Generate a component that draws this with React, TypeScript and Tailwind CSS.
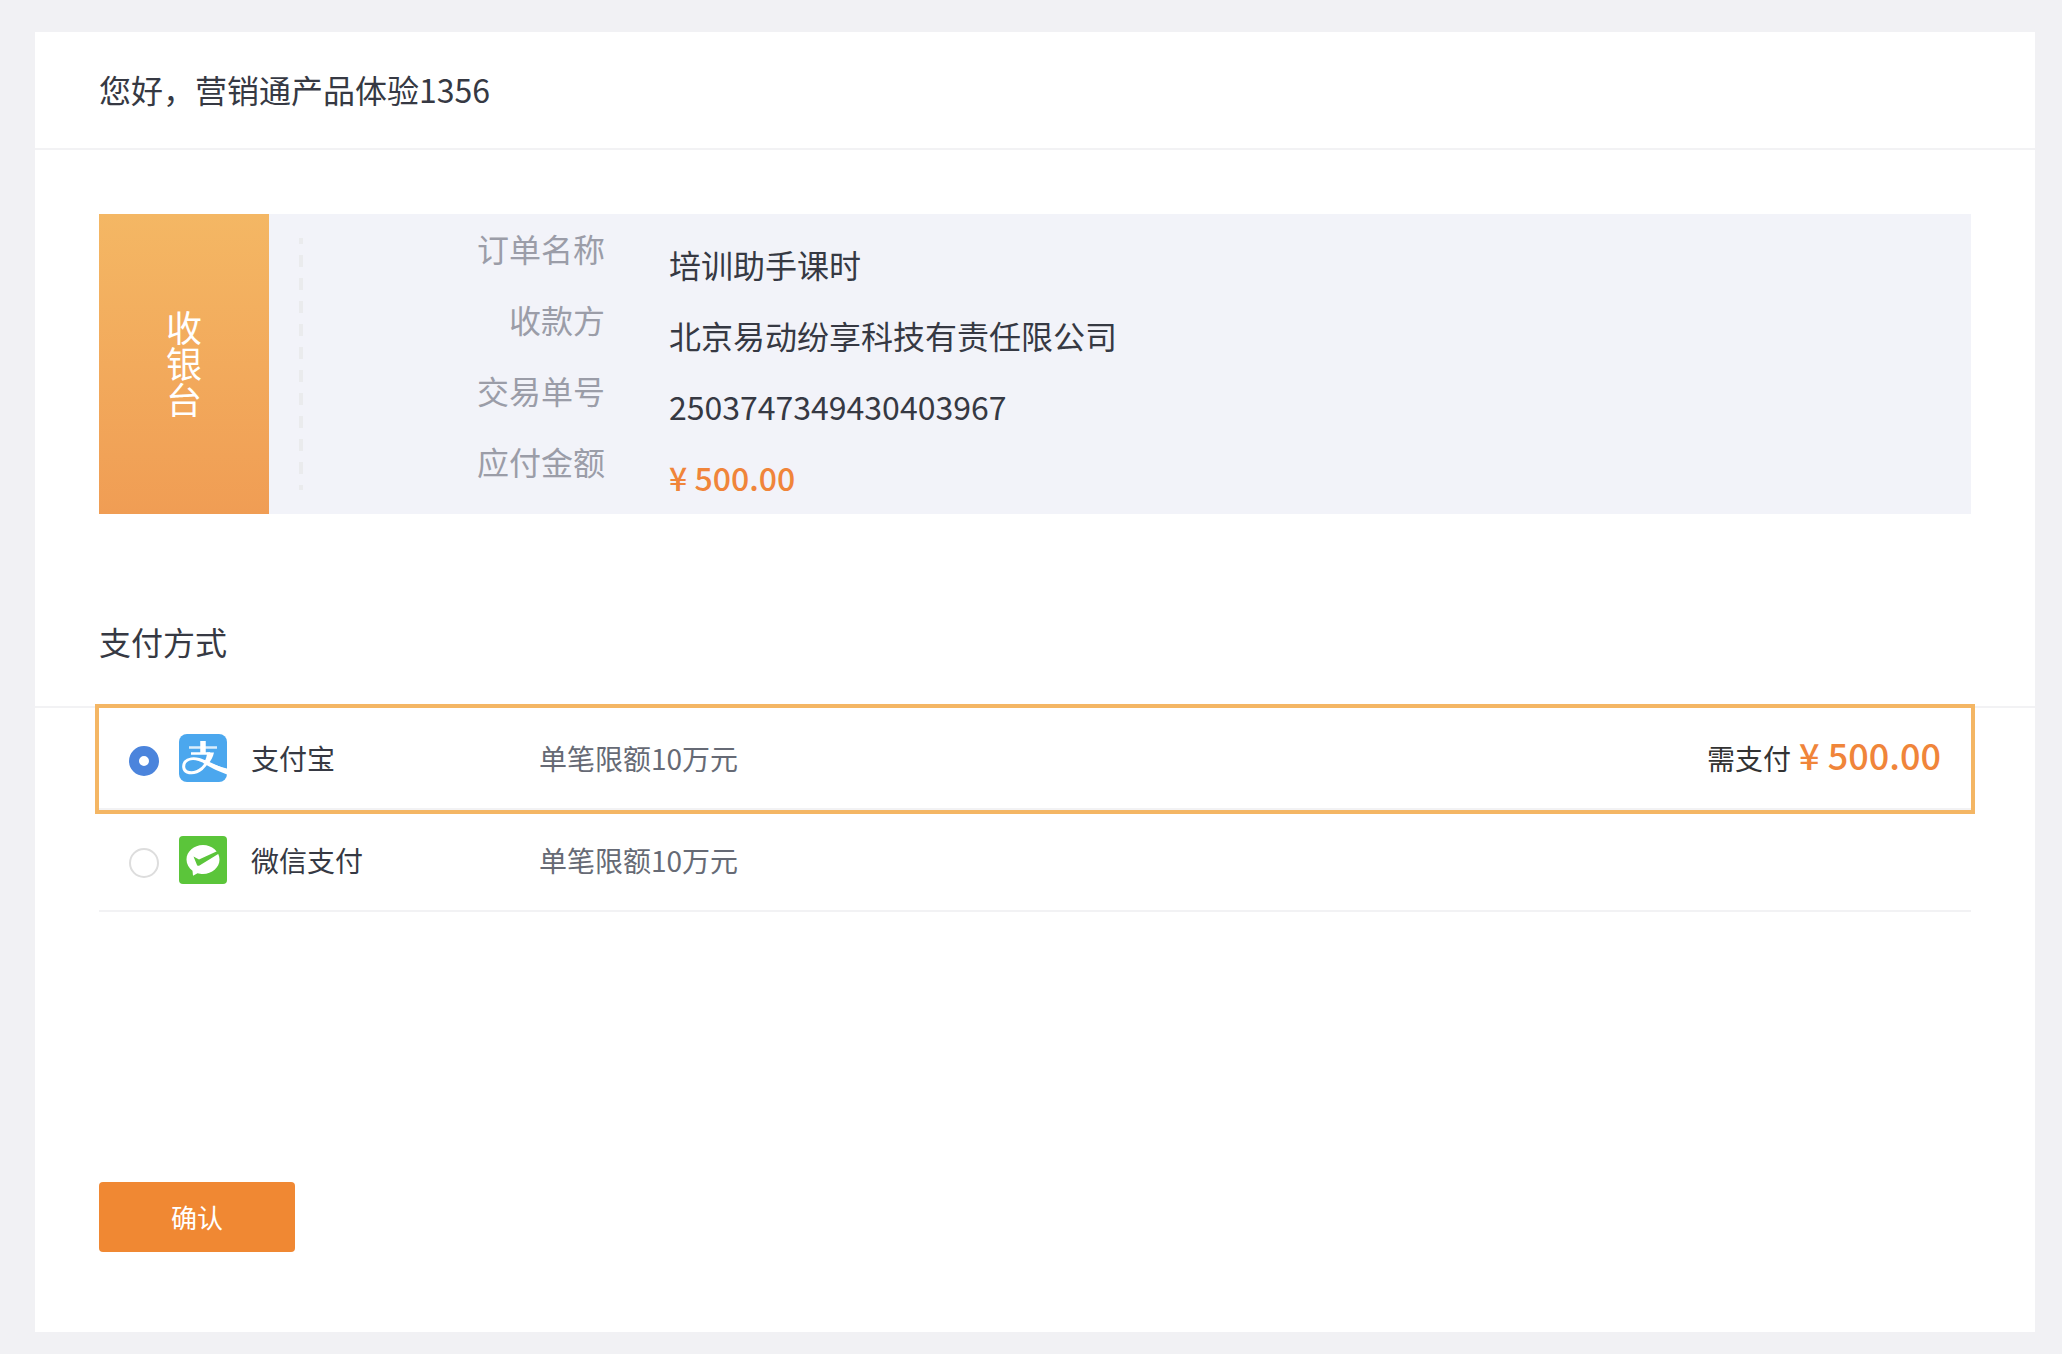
import React, { useState } from 'react';

const AlipayIcon: React.FC = () => (
  <svg viewBox="0 0 48 48" className="h-12 w-12 shrink-0" fill="none" aria-hidden="true">
    <rect width="48" height="48" rx="8" fill="#4ba7ee" />
    <path d="M24 7v13" stroke="#fff" strokeWidth="5.500" />
    <path d="M10 13.500h28" stroke="#fff" strokeWidth="2.500" opacity="0.8" />
    <path d="M12 19.500h19" stroke="#fff" strokeWidth="2.500" />
    <path
      d="M32 19C30 25 28 30 23 34.500C18 38.500 12 39.500 8 38C4 36.500 4 31 6 28C9 24.500 15 24 20 25.500C27 27.500 37 33 48 37"
      stroke="#fff"
      strokeWidth="3"
    />
    <path d="M28 18.500h7C34 23 32 27 29 30L25 28.500C27 25 28 22 28 18.500Z" fill="#fff" />
    <path d="M24 26.500C32 29.500 40 32.500 48 34.500V40.500C41 38 32 34 24 29Z" fill="#fff" />
  </svg>
);

const WechatPayIcon: React.FC = () => (
  <svg viewBox="0 0 48 48" className="h-12 w-12 shrink-0" fill="none" aria-hidden="true">
    <rect width="48" height="48" rx="4" fill="#5bc53a" />
    <path
      d="M24 9C33 9 40.500 15.500 40.500 23.500S33 38 24 38C22 38 20 37.700 18.500 37.200L14 39.800L13.500 34.800C9.800 32 7.500 28 7.500 23.500C7.500 15.500 15 9 24 9Z"
      fill="#fff"
    />
    <path d="M14.500 20.500L20 23.500L38.500 15L40 17.500L20.500 29.500C19.500 30 18.500 30 18 29Z" fill="#5bc53a" />
  </svg>
);

const orderInfo = [
  { label: '订单名称', value: '培训助手课时' },
  { label: '收款方', value: '北京易动纷享科技有责任限公司' },
  { label: '交易单号', value: '2503747349430403967' },
  { label: '应付金额', value: '¥ 500.00', highlight: true },
];

const methods = [
  { id: 'alipay', name: '支付宝', limit: '单笔限额10万元', icon: <AlipayIcon /> },
  { id: 'wechat', name: '微信支付', limit: '单笔限额10万元', icon: <WechatPayIcon /> },
];

const App: React.FC = () => {
  const [selected, setSelected] = useState('alipay');

  return (
    <div className="min-h-screen bg-[#f1f1f4] pt-8 pr-[27px] pb-[22px] pl-[35px] font-['Noto_Sans_CJK_SC',sans-serif] text-[#363943]">
      <main className="bg-white pb-20">
        <header className="flex h-[118px] items-center border-b-2 border-[#f2f2f4] px-16 pb-0.5">
          <h1 className="text-[32px]">您好，营销通产品体验1356</h1>
        </header>

        {/* Order summary */}
        <section className="mx-16 mt-16 flex bg-[#f2f3f9]">
          <div className="flex w-[170px] items-center justify-center bg-linear-to-b from-[#f4b764] to-[#f09d54] pb-1">
            <span className="w-9 text-center text-4xl leading-9 text-white">收银台</span>
          </div>
          <div className="my-6 ml-[30px] w-1 bg-[repeating-linear-gradient(to_bottom,#eaebed_0px,#eaebed_6px,transparent_6px,transparent_17px,#eaebed_17px,#eaebed_23px)]" />
          <dl className="flex-1 pb-4">
            {orderInfo.map((item) => (
              <div key={item.label} className="flex h-[71px] gap-16 text-[32px] leading-[68px]">
                <dt className="w-[302px] text-right text-[#9b9da8]">{item.label}</dt>
                <dd className={`pt-4 ${item.highlight ? 'font-medium text-[#f0853a]' : ''}`}>{item.value}</dd>
              </div>
            ))}
          </dl>
        </section>

        {/* Payment methods */}
        <h2 className="mt-16 flex h-[130px] items-center border-b-2 border-[#f2f2f4] px-16 pb-0.5 text-[32px]">支付方式</h2>
        <div className="mx-16">
          {methods.map((method) => (
            <label
              key={method.id}
              className={`flex h-[102px] cursor-pointer items-center border-b-2 border-[#f2f2f4] px-[30px] text-[28px] ${
                selected === method.id ? 'outline-4 outline-[#f4b664]' : ''
              }`}
            >
              <input
                type="radio"
                name="method"
                value={method.id}
                checked={selected === method.id}
                onChange={() => setSelected(method.id)}
                className="mt-1.5 mr-5 h-[30px] w-[30px] shrink-0 appearance-none rounded-full border-2 border-[#dddddd] bg-white checked:border-10 checked:border-[#4b84dc]"
              />
              {method.icon}
              <span className="ml-6 w-72">{method.name}</span>
              <span className="text-[#666a75]">{method.limit}</span>
              {selected === method.id && (
                <span className="ml-auto flex items-baseline gap-2 pb-1 text-[#333333]">
                  需支付
                  <span className="text-4xl font-medium text-[#f0853a]">¥ 500.00</span>
                </span>
              )}
            </label>
          ))}
        </div>

        <button
          type="button"
          className="mt-[270px] ml-16 block h-[70px] w-[196px] cursor-pointer rounded bg-[#f08833] pb-0.5 text-[26px] text-white"
        >
          确认
        </button>
      </main>
    </div>
  );
};

export default App;
